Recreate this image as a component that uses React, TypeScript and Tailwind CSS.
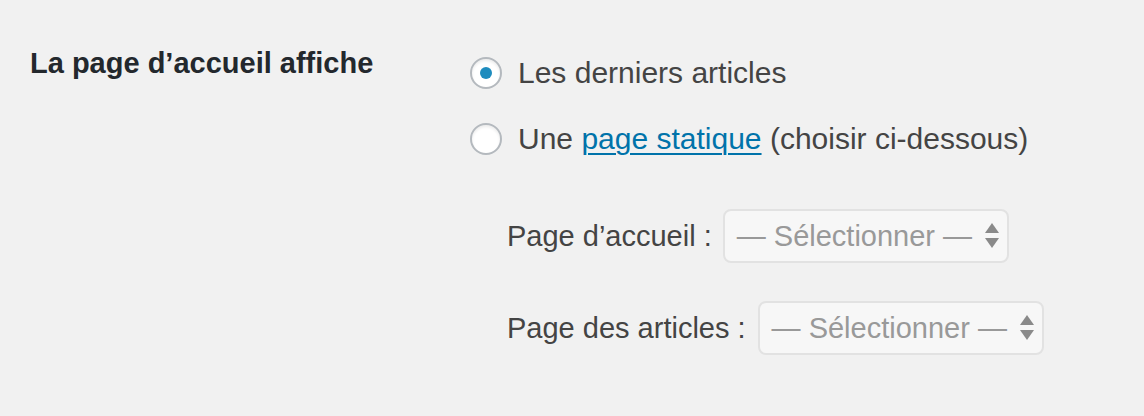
import React from "react";

const Radio: React.FC<{ checked?: boolean }> = ({ checked }) => (
    <span className="flex h-[32px] w-[32px] shrink-0 items-center justify-center rounded-full border-2 border-[#b4b9be] bg-white shadow-[inset_0_2px_3px_rgba(0,0,0,0.08)]">
        {checked && <span className="h-[12px] w-[12px] rounded-full bg-[#1e8cbe]" />}
    </span>
);

const Select: React.FC = () => (
    <div className="flex h-[54px] w-[286px] items-center justify-between rounded-[8px] border-2 border-[#e2e2e2] bg-[#f7f7f7] pl-[12px] pr-[8px]">
        <span className="text-[#999]">— Sélectionner —</span>
        <svg width="14" height="26" viewBox="0 0 14 26" className="shrink-0">
            <polygon points="7,0 14,10 0,10" fill="#8a8a8a" />
            <polygon points="0,15 14,15 7,25" fill="#8a8a8a" />
        </svg>
    </div>
);

export default function App() {
    return (
        <div
            className="h-[416px] w-full bg-[#f1f1f1] text-[29px] leading-[40px] text-[#444]"
            style={{ fontFamily: '"Liberation Sans", Arial, sans-serif' }}
        >
            <div className="flex">
                <div className="w-[470px] shrink-0 pl-[30px] pt-[43px] font-bold text-[#23282d]">
                    La page d’accueil affiche
                </div>
                <div className="flex flex-col pt-[53px]">
                    <label className="flex items-center gap-[16px] text-[30px]">
                        <Radio checked />
                        <span>Les derniers articles</span>
                    </label>
                    <label className="mt-[26px] flex items-center gap-[16px] text-[30px]">
                        <Radio />
                        <span>
                            Une{" "}
                            <a className="text-[#0073aa] underline underline-offset-[4px] decoration-[2px]">page statique</a>{" "}
                            (choisir ci-dessous)
                        </span>
                    </label>
                    <div className="mt-[50px] flex flex-col gap-[38px] pl-[37px]">
                        <div className="flex items-center gap-[11px]">
                            <span>Page d’accueil :</span>
                            <Select />
                        </div>
                        <div className="flex items-center gap-[12px]">
                            <span>Page des articles :</span>
                            <Select />
                        </div>
                    </div>
                </div>
            </div>
        </div>
    );
}
